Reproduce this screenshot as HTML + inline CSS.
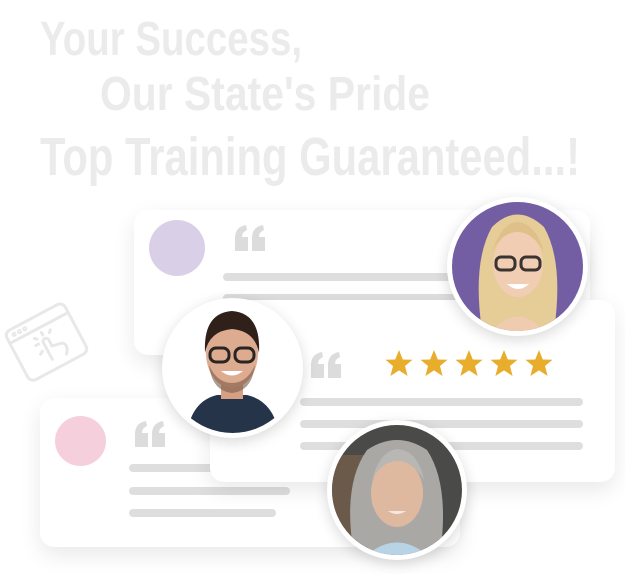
<!DOCTYPE html>
<html><head><meta charset="utf-8"><style>
*{margin:0;padding:0;box-sizing:border-box}
body{width:625px;height:574px;background:#fff;position:relative;overflow:hidden;font-family:"Liberation Sans",sans-serif}
.card{position:absolute;background:#fff;border-radius:14px;box-shadow:0 8px 22px rgba(0,0,0,.09)}
.ln{position:absolute;height:8px;border-radius:4px;background:#dedede}
.dot{position:absolute;border-radius:50%}
.q{position:absolute}
.av{position:absolute;border-radius:50%;background:#fff;box-shadow:0 4px 14px rgba(0,0,0,.15);overflow:hidden}
.av svg{position:absolute;left:5px;top:5px}
</style></head><body>
<svg width="0" height="0" style="position:absolute"><defs>
<g id="qm" fill="#dcdcdc"><path d="M0 13 Q0 2 11 0 L12 5 Q7 7 7 12 L13 12 L13 26 L0 26Z"/><path d="M17 13 Q17 2 28 0 L29 5 Q24 7 24 12 L30 12 L30 26 L17 26Z"/></g>
</defs></svg>
<svg style="position:absolute;left:0;top:0" width="625" height="200">
<g fill="#ebebeb" font-family="'Liberation Sans',sans-serif" font-weight="bold">
<text x="40" y="55" font-size="48" textLength="262" lengthAdjust="spacingAndGlyphs">Your Success,</text>
<text x="100" y="110" font-size="48" textLength="330" lengthAdjust="spacingAndGlyphs">Our State's Pride</text>
<text x="40" y="175" font-size="54" textLength="540" lengthAdjust="spacingAndGlyphs">Top Training Guaranteed...!</text>
</g></svg>

<svg style="position:absolute;left:2px;top:298px" width="90" height="90" viewBox="0 0 90 90">
<g transform="rotate(-28 45 45)" fill="none" stroke="#e8e8e8" stroke-width="3" stroke-linecap="round">
<rect x="12" y="16" width="66" height="56" rx="6"/>
<line x1="12" y1="28" x2="78" y2="28"/>
<circle cx="20" cy="22" r="1" /><circle cx="26" cy="22" r="1"/><circle cx="32" cy="22" r="1"/>
<path d="M42 62 L42 42 Q45 38 48 42 L48 50 L58 52 Q62 54 60 60 L57 64"/>
<line x1="45" y1="33" x2="45" y2="36"/><line x1="34" y1="42" x2="37" y2="42"/><line x1="36" y1="35" x2="38" y2="37"/><line x1="54" y1="35" x2="52" y2="37"/><line x1="34" y1="52" x2="37" y2="50"/>
</g></svg>

<div class="card" style="left:134px;top:210px;width:456px;height:145px"></div>
<div class="dot" style="left:149px;top:220px;width:56px;height:56px;background:#d9d0e8"></div>
<svg class="q" style="left:235px;top:225px" width="31" height="26"><use href="#qm"/></svg>
<div class="ln" style="left:223px;top:273px;width:300px"></div>
<div class="ln" style="left:223px;top:294px;width:300px"></div>
<div class="ln" style="left:280px;top:316px;width:200px"></div>

<div class="card" style="left:40px;top:398px;width:420px;height:149px"></div>
<div class="dot" style="left:55px;top:416px;width:51px;height:50px;background:#f5cfdc"></div>
<svg class="q" style="left:135px;top:421px" width="31" height="26"><use href="#qm"/></svg>
<div class="ln" style="left:129px;top:464px;width:160px"></div>
<div class="ln" style="left:129px;top:487px;width:161px"></div>
<div class="ln" style="left:129px;top:509px;width:147px"></div>

<div class="card" style="left:210px;top:300px;width:405px;height:182px"></div>
<svg class="q" style="left:311px;top:352px" width="31" height="26"><use href="#qm"/></svg>
<svg style="position:absolute;left:384px;top:349px" width="170" height="30" viewBox="0 0 170 30">
<g fill="#e9ad2d">
<path id="s" d="M15 1 L18.8 10.5 L28.5 10.8 L21 17 L23.6 27 L15 21.4 L6.4 27 L9 17 L1.5 10.8 L11.2 10.5Z"/>
<use href="#s" x="35"/><use href="#s" x="70"/><use href="#s" x="105"/><use href="#s" x="140"/>
</g></svg>
<div class="ln" style="left:300px;top:398px;width:283px"></div>
<div class="ln" style="left:300px;top:420px;width:283px"></div>
<div class="ln" style="left:300px;top:442px;width:283px"></div>

<div class="av" style="left:447px;top:197px;width:141px;height:139px">
<svg width="131" height="129" viewBox="0 0 131 129"><defs><clipPath id="c1"><ellipse cx="65.5" cy="64.5" rx="65.5" ry="64.5"/></clipPath></defs>
<g clip-path="url(#c1)"><rect width="131" height="129" fill="#735ea3"/>
<path d="M30 129 Q20 60 40 25 Q65 0 92 25 Q112 60 102 129Z" fill="#e6cc96"/>
<ellipse cx="66" cy="62" rx="25" ry="33" fill="#f1cdb4"/>
<path d="M40 129 Q66 100 92 129Z" fill="#efcbb0"/>
<path d="M40 50 Q50 20 66 20 Q84 22 92 50 Q80 30 66 30 Q50 30 40 50Z" fill="#dfc089"/>
<rect x="44" y="55" width="19" height="13" rx="5" fill="none" stroke="#3a3430" stroke-width="3"/>
<rect x="69" y="55" width="19" height="13" rx="5" fill="none" stroke="#3a3430" stroke-width="3"/>
<path d="M55 82 Q66 92 77 82Z" fill="#fff"/></g></svg></div>

<div class="av" style="left:162px;top:298px;width:141px;height:140px">
<svg width="131" height="130" viewBox="0 0 131 130"><defs><clipPath id="c2"><ellipse cx="65.5" cy="65" rx="65.5" ry="65"/></clipPath></defs>
<g clip-path="url(#c2)"><rect width="131" height="130" fill="#fff"/>
<path d="M20 130 Q25 98 50 92 L80 92 Q106 98 112 130Z" fill="#26344a"/>
<rect x="54" y="78" width="22" height="18" fill="#d6a085"/>
<ellipse cx="65" cy="50" rx="26" ry="35" fill="#dcab90"/>
<path d="M38 50 Q36 10 65 8 Q94 10 92 50 Q88 28 65 26 Q42 28 38 50Z" fill="#2f211a"/>
<path d="M42 62 Q45 88 65 90 Q85 88 88 62 Q80 80 65 80 Q50 80 42 62Z" fill="#7a5a48" opacity=".6"/>
<rect x="43" y="45" width="19" height="14" rx="6" fill="none" stroke="#2a2522" stroke-width="3"/>
<rect x="68" y="45" width="19" height="14" rx="6" fill="none" stroke="#2a2522" stroke-width="3"/>
<path d="M54 68 Q65 77 76 68Z" fill="#fff"/></g></svg></div>

<div class="av" style="left:327px;top:420px;width:140px;height:140px">
<svg width="130" height="130" viewBox="0 0 130 130"><defs><clipPath id="c3"><ellipse cx="65" cy="65" rx="65" ry="65"/></clipPath></defs>
<g clip-path="url(#c3)"><rect width="130" height="130" fill="#4a4b48"/>
<rect x="0" y="30" width="35" height="100" fill="#6b5a4a"/>
<path d="M22 130 Q10 60 35 25 Q65 5 95 25 Q118 60 108 130Z" fill="#a9a8a5"/>
<ellipse cx="65" cy="68" rx="26" ry="34" fill="#dfb8a0"/>
<path d="M40 55 Q48 25 66 24 Q86 26 92 55 Q80 36 66 36 Q50 36 40 55Z" fill="#b8b7b3"/>
<path d="M35 130 Q65 105 95 130Z" fill="#b9d3e6"/>
<path d="M56 86 Q65 92 74 86Z" fill="#f4e8e4"/></g></svg></div>
</body></html>
